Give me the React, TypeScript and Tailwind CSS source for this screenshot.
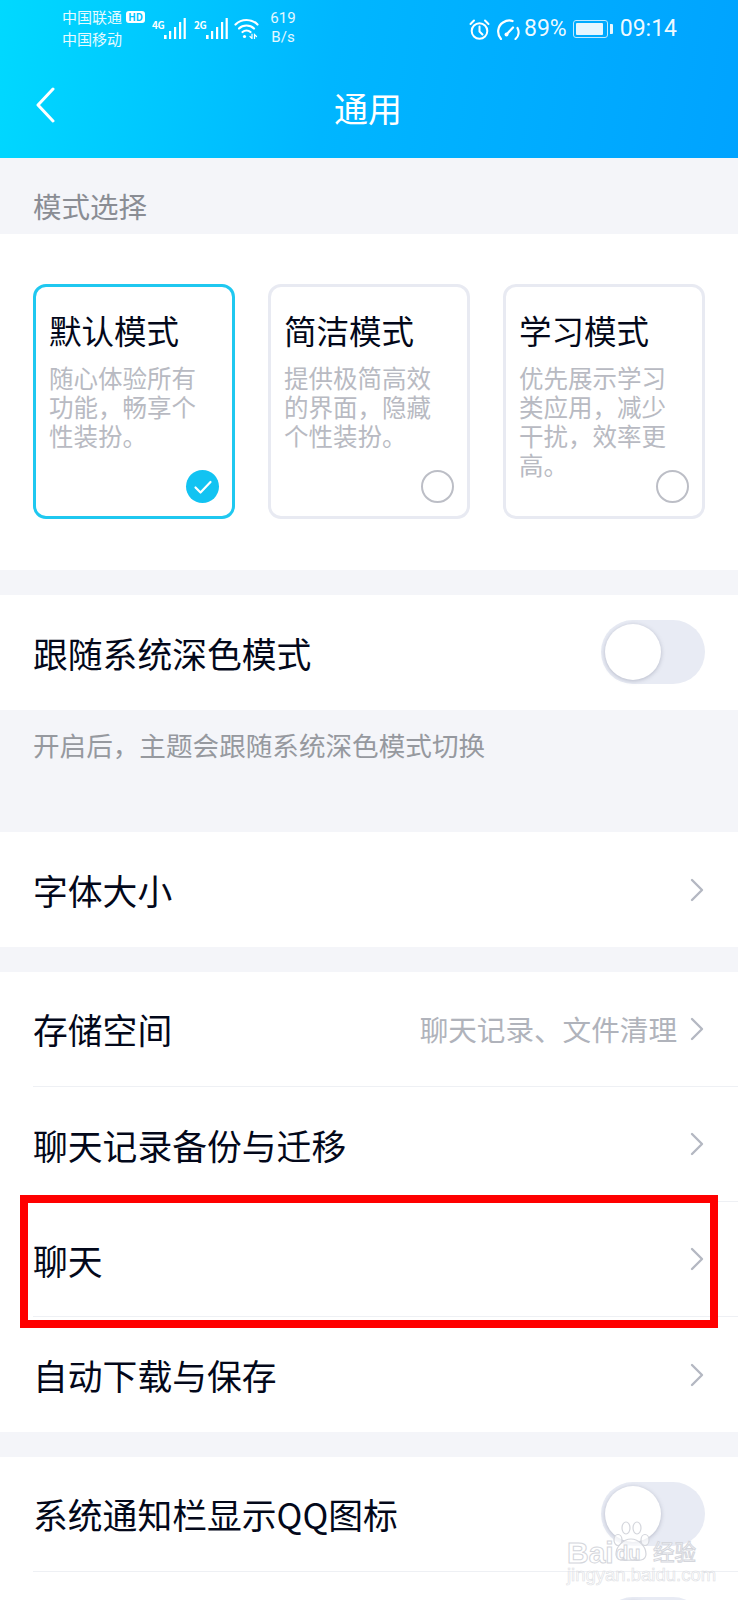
const font = { fontFamily: '"Noto Sans CJK SC", "Noto Sans", sans-serif' };
const latin = { fontFamily: '"Liberation Sans", sans-serif' };

const Chevron = () => (
  <svg viewBox="0 0 14 24" className="w-[14px] h-[24px] shrink-0" fill="none" stroke="#b4b8c2" strokeWidth="2.4" strokeLinecap="round" strokeLinejoin="round">
    <path d="M2 2l10 10L2 22" />
  </svg>
);

const Toggle = () => (
  <div className="w-[104px] h-[64px] rounded-full bg-[#e8ebf4] flex items-center pl-[4px] shrink-0">
    <div className="w-[56px] h-[56px] rounded-full bg-white shadow-[0_1px_4px_rgba(90,95,120,0.35)]" />
  </div>
);

const Row = ({ title, hint, divider, raised, children }: { title: string; hint?: string; divider?: boolean; raised?: boolean; children: React.ReactNode }) => (
  <div className="h-[115px] pl-[33px] bg-white">
    <div className={`h-full flex items-center pr-[34px] ${divider ? "border-b border-[#eef0f4]" : ""}`}>
      <span className={`text-[34.8px] leading-[44px] text-[#03081a] flex-1 ${raised ? "" : "pt-[2px]"}`}>{title}</span>
      {hint && <span className="text-[28.6px] text-[#b0b3bb] mr-[13px]">{hint}</span>}
      {children}
    </div>
  </div>
);

const ModeCard = ({ title, lines, selected }: { title: string; lines: string[]; selected?: boolean }) => (
  <div className={`relative w-[202px] h-[235px] rounded-[13px] border-[3px] pl-[13px] pt-[21px] ${selected ? "border-[#1fc8f0]" : "border-[#e8eaf2]"}`}>
    <div className="text-[32.5px] leading-[44px] text-[#03081a] whitespace-nowrap">{title}</div>
    <div className="mt-[11px] text-[24.5px] leading-[29px] text-[#b8bac2]">
      {lines.map((l) => (
        <div key={l} className="whitespace-nowrap">{l}</div>
      ))}
    </div>
    {selected ? (
      <div className="absolute right-[13px] bottom-[13px] w-[33px] h-[33px] rounded-full bg-[#12c3f2] flex items-center justify-center">
        <svg viewBox="0 0 20 20" className="w-[20px] h-[20px]" fill="none" stroke="#fff" strokeWidth="2.2" strokeLinecap="round" strokeLinejoin="round">
          <path d="M2.5 10.5l5 5L17.5 5" />
        </svg>
      </div>
    ) : (
      <div className="absolute right-[13px] bottom-[13px] w-[33px] h-[33px] rounded-full border-2 border-[#bcbec6]" />
    )}
  </div>
);

const Signal = ({ label }: { label: string }) => (
  <div className="flex items-start w-[34px] shrink-0">
    <span className="text-[10px] leading-[10px] font-bold text-white mt-[2px] w-[12px] tracking-[-0.5px] whitespace-nowrap">{label}</span>
    <svg viewBox="0 0 22 21" className="w-[22px] h-[21px]" fill="#fff">
      <rect x="0" y="17" width="2.6" height="4" />
      <rect x="5" y="13" width="2.2" height="8" />
      <rect x="10" y="9" width="2.2" height="12" />
      <rect x="15" y="4" width="2.2" height="17" />
      <rect x="19.6" y="0" width="2.2" height="21" />
    </svg>
  </div>
);

const Wifi = () => (
  <svg viewBox="0 0 25 21" className="w-[25px] h-[21px] shrink-0" fill="none" stroke="#fff" strokeWidth="2.2" strokeLinecap="round">
    <path d="M1.5 6.5C7.5 0.5 17.5 0.5 23.5 6.5" />
    <path d="M5 10.5C9 6.5 16 6.5 20 10.5" />
    <path d="M8.5 14C10.8 12 14.2 12 16.5 14" />
    <circle cx="10.5" cy="18.5" r="1.6" fill="#fff" stroke="none" />
    <path d="M18 16v4.5l-2-2M20.5 21v-4.5l2 2" strokeWidth="1.2" />
  </svg>
);

const Alarm = () => (
  <svg viewBox="0 0 21 21" className="w-[21px] h-[21px] shrink-0" fill="none" stroke="#fff" strokeWidth="2" strokeLinecap="round" strokeLinejoin="round">
    <circle cx="10.5" cy="12" r="7.8" />
    <path d="M10.5 7.5V12.5l3 3" />
    <path d="M1.5 5L5 1.5M19.5 5L16 1.5" />
  </svg>
);

const Gauge = () => (
  <svg viewBox="0 0 24 21" className="w-[24px] h-[21px] shrink-0" fill="none" stroke="#fff" strokeWidth="2.2" strokeLinecap="round">
    <path d="M5 20C0.5 15 1.5 7 7 3.5C10.5 1.2 14 1 16.5 2" />
    <path d="M21.5 9C23.5 13 22.5 17.5 19.5 20" />
    <path d="M10.5 15.5L17 8.5" />
    <circle cx="10.5" cy="15.5" r="2" fill="#fff" stroke="none" />
  </svg>
);

const Battery = () => (
  <div className="flex items-center gap-[2px] shrink-0">
    <div className="w-[35px] h-[18px] rounded-[3px] border border-[#bfe8ff] p-[2px]">
      <div className="w-[27px] h-full bg-[#e6f6ff] rounded-[1px]" />
    </div>
    <div className="w-[3px] h-[10px] bg-[#e6f6ff] rounded-r-[1px]" />
  </div>
);

export default function App() {
  return (
    <div className="relative w-[738px] h-[1600px] overflow-hidden bg-[#f4f5f9]" style={font}>
      <header className="h-[158px] bg-[linear-gradient(100deg,#00d9ff_0%,#00b6ff_45%,#00a3ff_100%)] text-white">
        <div className="h-[56px] flex items-center pl-[62px] pr-[61px]">
          <div className="w-[83px] shrink-0 text-[15px] leading-[22px] text-white/90 whitespace-nowrap">
            <div className="flex items-center">
              中国联通
              <span className="ml-[4px] w-[20px] h-[12px] rounded-[3px] bg-white text-[#00c4ff] text-[10px] leading-[12px] font-bold text-center">HD</span>
            </div>
            <div>中国移动</div>
          </div>
          <div className="ml-[7px] flex items-center gap-[8px]">
            <Signal label="4G" />
            <Signal label="2G" />
          </div>
          <div className="ml-[6px]">
            <Wifi />
          </div>
          <div className="ml-[11px] w-[26px] text-center text-[15px] leading-[19px] text-white/90 whitespace-nowrap" style={{ fontFamily: "Roboto, sans-serif" }}>
            <div>619</div>
            <div>B/s</div>
          </div>
          <div className="ml-auto flex items-center pt-[2px]" style={{ fontFamily: "Roboto, sans-serif" }}>
            <Alarm />
            <div className="ml-[6px]">
              <Gauge />
            </div>
            <span className="ml-[4px] text-[23px] leading-[28px] text-white/95">89%</span>
            <div className="ml-[6px]">
              <Battery />
            </div>
            <span className="ml-[7px] text-[23px] leading-[28px] text-white/95">09:14</span>
          </div>
        </div>
        <div className="h-[102px] grid grid-cols-[1fr_auto_1fr] items-center">
          <svg viewBox="0 0 20 36" className="ml-[35px] w-[20px] h-[36px] mb-[4px]" fill="none" stroke="#fff" strokeWidth="3" strokeLinecap="round" strokeLinejoin="round">
            <path d="M18 2L3 18l15 16" />
          </svg>
          <h1 className="text-[34px] leading-[44px] font-normal pr-[2px] mt-[1px]">通用</h1>
        </div>
      </header>

      <div className="h-[76px] pt-[28px] pl-[33px] text-[28.5px] leading-[40px] text-[#8a8d94]">模式选择</div>

      <section className="bg-white flex gap-[33px] pl-[33px] pt-[50px] pb-[51px]">
        <ModeCard selected title="默认模式" lines={["随心体验所有", "功能，畅享个", "性装扮。"]} />
        <ModeCard title="简洁模式" lines={["提供极简高效", "的界面，隐藏", "个性装扮。"]} />
        <ModeCard title="学习模式" lines={["优先展示学习", "类应用，减少", "干扰，效率更", "高。"]} />
      </section>

      <div className="mt-[25px]">
        <Row title="跟随系统深色模式" raised>
          <div className="-mr-[1px] -mt-[2px]">
            <Toggle />
          </div>
        </Row>
      </div>
      <div className="h-[122px] pt-[17px] pl-[33px] text-[26.6px] leading-[36px] text-[#96999f]">开启后，主题会跟随系统深色模式切换</div>

      <Row title="字体大小" raised>
        <Chevron />
      </Row>

      <div className="mt-[25px]">
        <Row title="存储空间" hint="聊天记录、文件清理" divider raised>
          <Chevron />
        </Row>
        <Row title="聊天记录备份与迁移" divider>
          <Chevron />
        </Row>
        <Row title="聊天" divider>
          <Chevron />
        </Row>
        <Row title="自动下载与保存" raised>
          <Chevron />
        </Row>
      </div>

      <div className="mt-[25px]">
        <Row title="系统通知栏显示QQ图标" divider raised>
          <div className="-mr-[1px]">
            <Toggle />
          </div>
        </Row>
        <div className="h-[115px] bg-white flex justify-end pt-[25px] pr-[33px]">
          <Toggle />
        </div>
      </div>

      {/* red highlight box */}
      <div className="absolute left-[20px] top-[1195px] w-[698px] h-[133px] border-[8px] border-[#ff0000]" />

      {/* watermark */}
      <div className="absolute left-[567px] top-[1520px] w-[130px] h-[62px]">
        <div className="absolute left-0 top-[16px] text-[30px] leading-[34px] font-bold text-white/80 [-webkit-text-stroke:1px_#d4d6dc] whitespace-nowrap" style={latin}>Bai</div>
        <svg viewBox="0 0 38 42" className="absolute left-[45px] top-0 w-[38px] h-[42px]" fill="#ffffff" fillOpacity="0.7" stroke="#d4d6dc" strokeWidth="1.2">
          <ellipse cx="6" cy="20" rx="4" ry="5.5" />
          <ellipse cx="14" cy="8" rx="4" ry="6" />
          <ellipse cx="25" cy="8" rx="4" ry="6" />
          <ellipse cx="33" cy="20" rx="4" ry="5.5" />
          <path d="M19 19c-8 0-15 8-15 15 0 7 8 7 15 6 7 1 15 1 15-6 0-7-7-15-15-15z" />
        </svg>
        <div className="absolute left-[49px] top-[21px] text-[20px] leading-[24px] font-bold text-white/80 [-webkit-text-stroke:1px_#d4d6dc] whitespace-nowrap" style={latin}>du</div>
        <div className="absolute left-[86px] top-[16px] text-[21.5px] leading-[30px] text-white/80 [-webkit-text-stroke:1px_#d4d6dc] whitespace-nowrap">经验</div>
        <div className="absolute left-0 top-[46px] text-[18.5px] leading-[18px] text-white/70 [-webkit-text-stroke:0.6px_#dcdee3] whitespace-nowrap" style={latin}>jingyan.baidu.com</div>
      </div>
    </div>
  );
}
